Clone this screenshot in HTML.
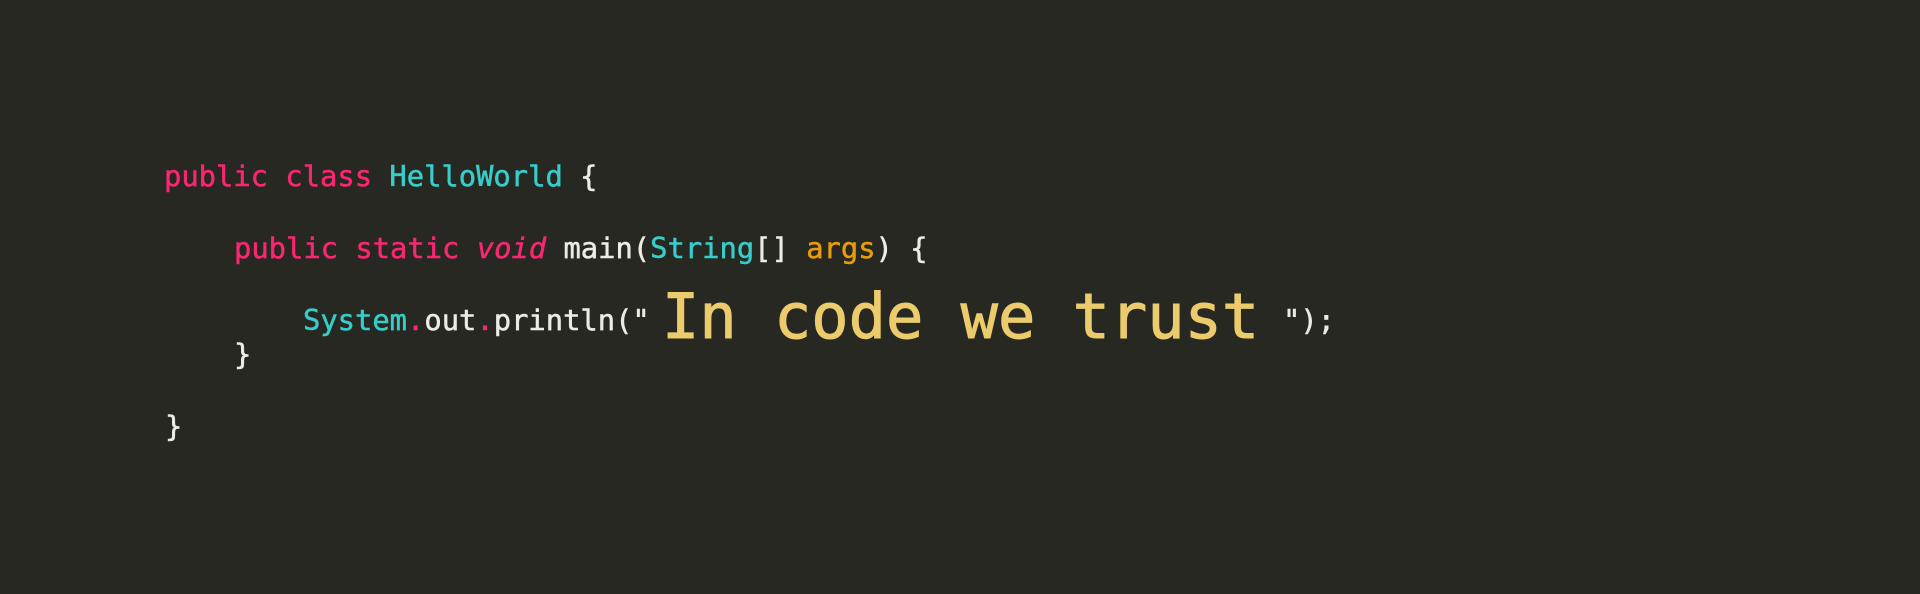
<!DOCTYPE html>
<html><head><meta charset="utf-8"><style>
html,body{margin:0;padding:0;}
body{width:1920px;height:594px;background:#272822;position:relative;overflow:hidden;font-family:"DejaVu Sans Mono","Liberation Mono",monospace;}
.l{position:absolute;white-space:pre;font-size:28.8px;line-height:29px;color:#ecece6;-webkit-text-stroke:0.5px currentColor;}
.k{color:#f92672}.c{color:#36cdcb}.o{color:#e89c0c}.y{color:#ebcb6b}
.big{position:absolute;white-space:pre;font-size:62px;line-height:62px;letter-spacing:0px;color:#ebcb6b;-webkit-text-stroke:1px currentColor;}
</style></head><body>
<div class="l" style="left:164px;top:162px"><span class="k">public</span> <span class="k">class</span> <span class="c">HelloWorld</span> {</div>
<div class="l" style="left:234px;top:234px"><span class="k">public</span> <span class="k">static</span> <span class="k" style="font-style:italic">void</span> main(<span class="c">String</span>[] <span class="o">args</span>) {</div>
<div class="l" style="left:303px;top:306px"><span class="c">System</span><span class="k">.</span>out<span class="k">.</span>println("</div>
<div class="big" style="left:662px;top:286px">In code we trust</div>
<div class="l" style="left:1283px;top:306px">");</div>
<div class="l" style="left:234px;top:340px">}</div>
<div class="l" style="left:165px;top:412px">}</div>
</body></html>
